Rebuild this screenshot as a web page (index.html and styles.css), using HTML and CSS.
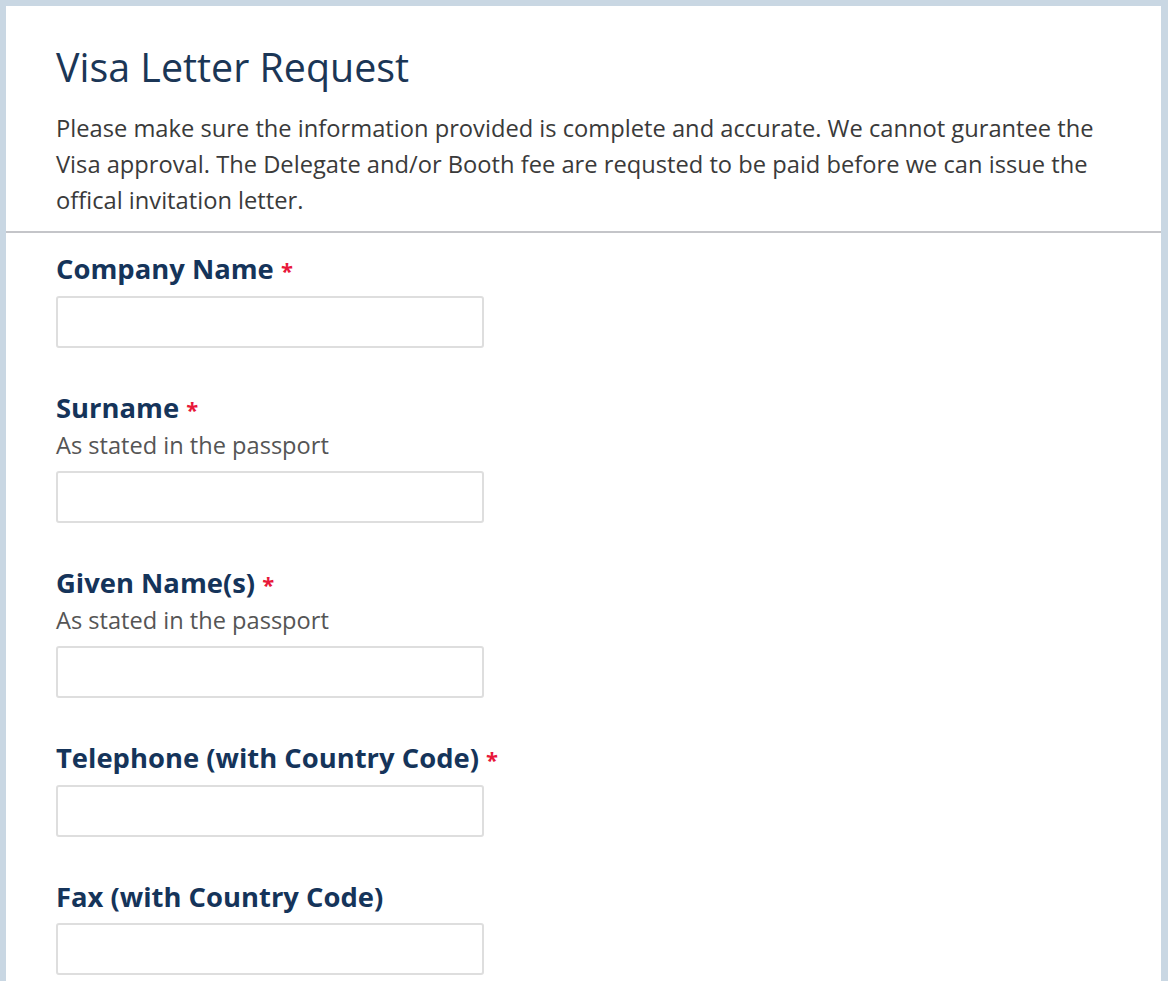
FILE: index.html
```html
<!DOCTYPE html>
<html lang="en">
<head>
<meta charset="utf-8">
<title>Visa Letter Request</title>
<link rel="stylesheet" href="styles.css">
</head>
<body>
<div class="card">
  <header class="head">
    <h1 class="title">Visa Letter Request</h1>
    <p class="desc">Please make sure the information provided is complete and accurate. We cannot gurantee the Visa approval. The Delegate and/or Booth fee are requsted to be paid before we can issue the offical invitation letter.</p>
  </header>
  <form class="form">
    <div class="field">
      <label class="label">Company Name <span class="req">*</span></label>
      <input class="input" type="text">
    </div>
    <div class="field">
      <label class="label">Surname <span class="req">*</span></label>
      <div class="help">As stated in the passport</div>
      <input class="input" type="text">
    </div>
    <div class="field">
      <label class="label">Given Name(s) <span class="req">*</span></label>
      <div class="help">As stated in the passport</div>
      <input class="input" type="text">
    </div>
    <div class="field">
      <label class="label">Telephone (with Country Code) <span class="req">*</span></label>
      <input class="input" type="text">
    </div>
    <div class="field">
      <label class="label">Fax (with Country Code)</label>
      <input class="input" type="text">
    </div>
  </form>
</div>
</body>
</html>
```
FILE: styles.css
```css
html, body { margin: 0; padding: 0; }
body {
  background: #c9d7e3;
  padding: 6px 7px 0 6px;
  font-family: "Open Sans", "Noto Sans", sans-serif;
  height: 981px;
  box-sizing: border-box;
  overflow: hidden;
}
.card {
  background: #ffffff;
  min-height: 975px;
}
.head {
  padding: 33px 50px 13px 50px;
  border-bottom: 2px solid #c4c5c9;
}
.title {
  margin: 0;
  font-weight: 400;
  font-size: 39.4px;
  line-height: 56px;
  color: #1b3656;
}
.desc {
  margin: 15px 0 0 0;
  font-size: 23.7px;
  line-height: 36px;
  color: #3a3a3a;
}
.form {
  padding: 18px 50px 0 50px;
  display: flex;
  flex-direction: column;
  gap: 42px;
}
.field { display: flex; flex-direction: column; }
.label {
  font-size: 27.4px;
  font-weight: 700;
  line-height: 36px;
  color: #15345a;
}
.req { color: #e8183a; font-size: 22px; }
.help {
  font-size: 23.6px;
  line-height: 36px;
  color: #555555;
}
.input {
  margin-top: 8px;
  width: 428px;
  height: 52px;
  box-sizing: border-box;
  border: 2px solid #dedede;
  border-radius: 3px;
  background: #fff;
}
```
